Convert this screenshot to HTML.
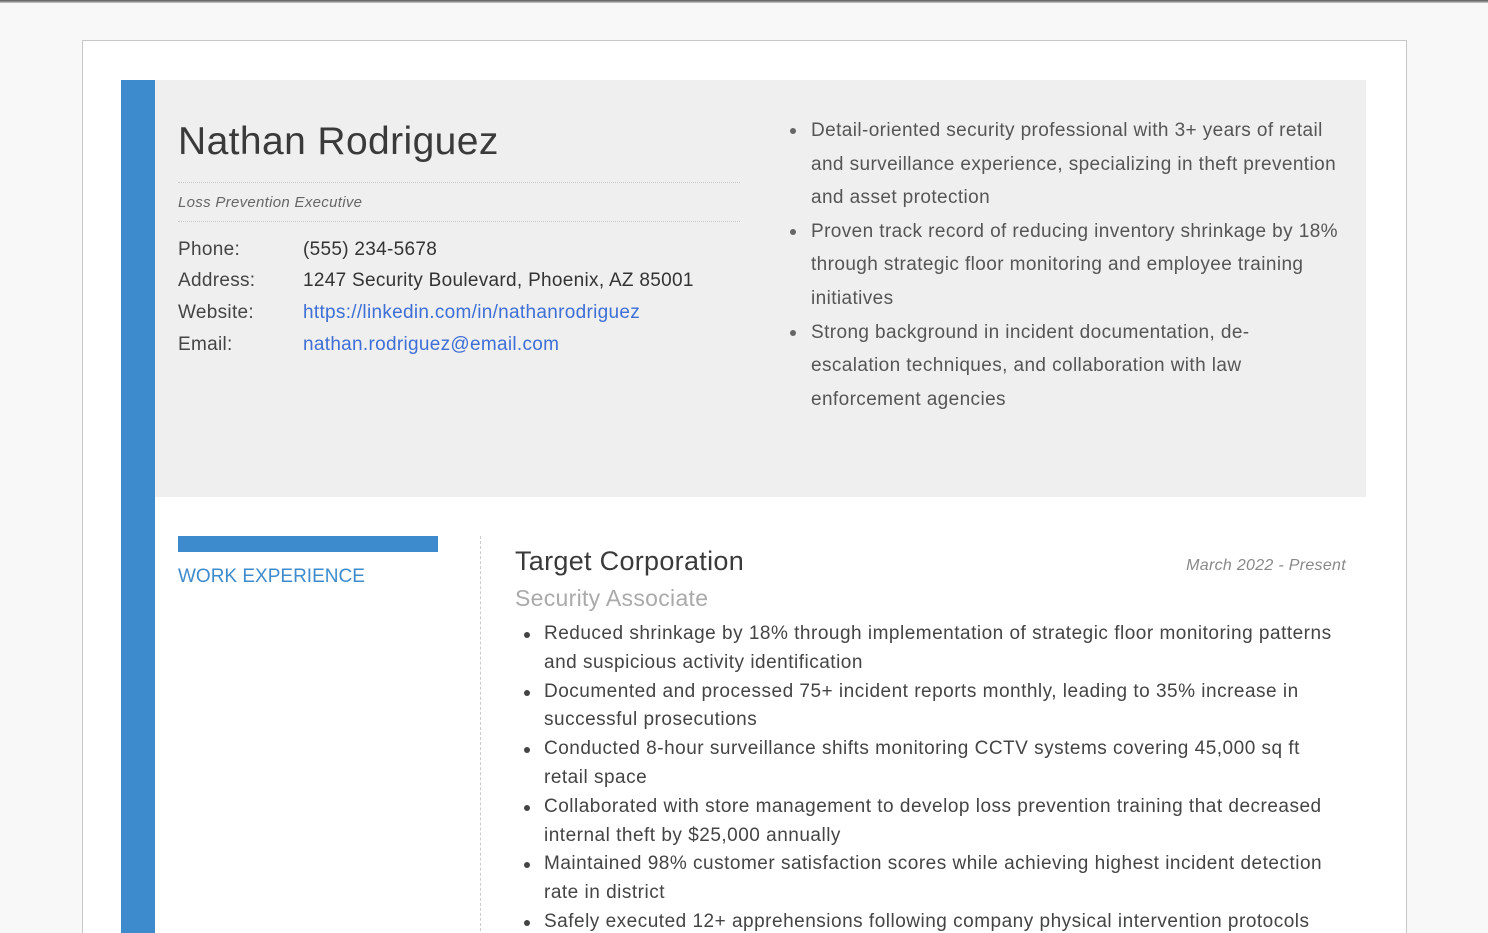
<!DOCTYPE html>
<html><head><style>
*{margin:0;padding:0;box-sizing:border-box}
html,body{width:1488px;height:933px;overflow:hidden}
body{background:#f8f8f8;font-family:"Liberation Sans",sans-serif;color:#333;position:relative}
.topline{position:absolute;left:0;top:0;width:1488px;height:3px;background:linear-gradient(#555,#ccc)}
.card{position:absolute;left:82px;top:40px;width:1325px;height:1000px;background:#fff;border:1px solid #c8c8c8}
.bar{position:absolute;left:121px;top:80px;width:34px;height:900px;background:#3d8bcd}
.head{position:absolute;left:155px;top:80px;width:1211px;height:417px;background:#efefef}
.name{position:absolute;left:178px;top:120px;font-size:39px;color:#3a3a3a;letter-spacing:0.4px}
.rule{position:absolute;left:178px;width:562px;border-top:1px dotted #c8c8c8}
.title{position:absolute;left:178px;top:194px;font-size:15px;font-style:italic;color:#666;letter-spacing:0.3px}
.row{position:absolute;left:178px;font-size:19px;color:#444;letter-spacing:0.3px}
.row span{position:absolute;left:125px;white-space:nowrap;color:#333}
.row a{color:#3d6fd6;text-decoration:none}
.summary{position:absolute;left:790px;top:114px;width:600px;font-size:19px;line-height:33.6px;color:#555;list-style:none;white-space:nowrap;letter-spacing:0.4px}
.summary li{position:relative;padding-left:21px}
.summary li:before{content:"";position:absolute;left:0;top:14px;width:6px;height:6px;border-radius:50%;background:#666}
.secbar{position:absolute;left:178px;top:536px;width:260px;height:16px;background:#3d8bcd}
.sec{position:absolute;left:178px;top:566px;font-size:19px;color:#3d8bcd}
.vline{position:absolute;left:480px;top:536px;height:400px;border-left:1px dashed #ccc}
.co{position:absolute;left:515px;top:546px;font-size:27px;color:#3a3a3a;letter-spacing:0.3px}
.role{position:absolute;left:515px;top:585px;font-size:23px;color:#aaa;letter-spacing:0.3px}
.date{position:absolute;right:142px;top:557px;font-size:16px;font-style:italic;color:#888;letter-spacing:0.3px}
.bul{position:absolute;left:523px;top:620px;width:900px;font-size:19px;line-height:28.8px;color:#444;list-style:none;white-space:nowrap;letter-spacing:0.5px}
.bul li{position:relative;padding-left:21px}
.bul li:before{content:"";position:absolute;left:1px;top:12px;width:6px;height:6px;border-radius:50%;background:#444}
</style></head><body>
<div class="topline"></div>
<div class="card"></div>
<div class="head"></div>
<div class="bar"></div>
<div class="name">Nathan Rodriguez</div>
<div class="rule" style="top:182px"></div>
<div class="title">Loss Prevention Executive</div>
<div class="rule" style="top:221px"></div>
<div class="row" style="top:239px">Phone:<span>(555) 234-5678</span></div>
<div class="row" style="top:270px">Address:<span>1247 Security Boulevard, Phoenix, AZ 85001</span></div>
<div class="row" style="top:302px">Website:<span><a>https://linkedin.com/in/nathanrodriguez</a></span></div>
<div class="row" style="top:334px">Email:<span><a>nathan.rodriguez@email.com</a></span></div>
<ul class="summary">
<li>Detail-oriented security professional with 3+ years of retail<br>and surveillance experience, specializing in theft prevention<br>and asset protection</li>
<li>Proven track record of reducing inventory shrinkage by 18%<br>through strategic floor monitoring and employee training<br>initiatives</li>
<li>Strong background in incident documentation, de-<br>escalation techniques, and collaboration with law<br>enforcement agencies</li>
</ul>
<div class="secbar"></div>
<div class="sec">WORK EXPERIENCE</div>
<div class="vline"></div>
<div class="co">Target Corporation</div>
<div class="role">Security Associate</div>
<div class="date">March 2022 - Present</div>
<ul class="bul">
<li>Reduced shrinkage by 18% through implementation of strategic floor monitoring patterns<br>and suspicious activity identification</li>
<li>Documented and processed 75+ incident reports monthly, leading to 35% increase in<br>successful prosecutions</li>
<li>Conducted 8-hour surveillance shifts monitoring CCTV systems covering 45,000 sq ft<br>retail space</li>
<li>Collaborated with store management to develop loss prevention training that decreased<br>internal theft by $25,000 annually</li>
<li>Maintained 98% customer satisfaction scores while achieving highest incident detection<br>rate in district</li>
<li>Safely executed 12+ apprehensions following company physical intervention protocols</li>
</ul>
</body></html>
